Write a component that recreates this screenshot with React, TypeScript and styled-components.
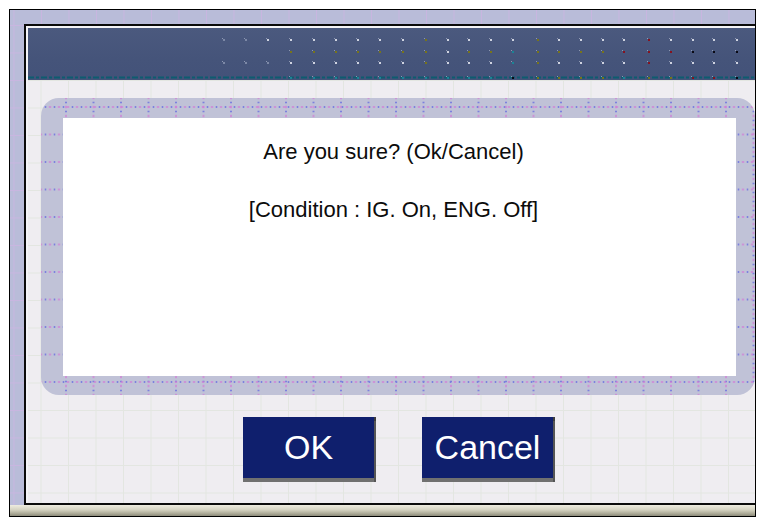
import React from "react";
import styled, { createGlobalStyle } from "styled-components";

const Global = createGlobalStyle`
  html, body { margin: 0; padding: 0; background: #ffffff; }
  body { font-family: "Liberation Sans", Arial, Helvetica, sans-serif; }
`;

const Page = styled.div`
  padding: 9px 0 0 9px;
`;

const Frame = styled.div`
  width: 747px;
  box-sizing: border-box;
  border: 1px solid #000;
  display: flex;
  flex-direction: column;
  background-color: #b9bcd9;
  background-image: linear-gradient(90deg, #c8b6e0 0 1px, transparent 1px),
    linear-gradient(180deg, #c8b6e0 0 1px, transparent 1px);
  background-size: 27.5px 100%, 100% 27.5px;
  background-position: 3.5px 0, 0 15px;
`;

const Body = styled.div`
  padding: 14px 0 0 14px;
`;

const Screen = styled.div`
  border: 2px solid #0b0b0b;
  border-right: none;
  padding: 2px 0 0 2px;
  background: #f4f4f7;
  display: flex;
  flex-direction: column;
`;

const Header = styled.div`
  height: 52px;
  background: linear-gradient(180deg, #4b597e 0%, #45547a 60%, #435279 100%);
`;

const HeaderArt = styled.svg`
  display: block;
  width: 100%;
  height: 52px;
`;

const Content = styled.div`
  height: 423px;
  box-sizing: border-box;
  padding: 18px 0 0 13px;
  display: flex;
  flex-direction: column;
  background-color: #efedf1;
  background-image: linear-gradient(90deg, #e3e6e1 0 1px, transparent 1px),
    linear-gradient(180deg, #e3e6e1 0 1px, transparent 1px);
  background-size: 27.5px 100%, 100% 27.5px;
  background-position: 12.5px 0, 0 0;
`;

const Panel = styled.div`
  height: 297px;
  box-sizing: border-box;
  padding: 20px 19px 19px 22px;
  border-radius: 18px;
  background-color: #c0c2d7;
  background-image:
    radial-gradient(circle, #7c80de 0 0.9px, transparent 1.2px),
    radial-gradient(circle, #d27ad6 0 0.9px, transparent 1.2px),
    radial-gradient(circle, #7c80de 0 0.9px, transparent 1.2px),
    radial-gradient(circle, #d27ad6 0 0.9px, transparent 1.2px);
  background-size: 9px 27.5px, 9px 27.5px, 27.5px 9px, 27.5px 9px;
  background-position: 0 -4.75px, 4.5px -4.75px, 11.25px 0, 11.25px 4.5px;
`;

const Message = styled.div`
  height: 100%;
  box-sizing: border-box;
  background: #ffffff;
  display: flex;
  flex-direction: column;
  align-items: center;
  padding: 21px 12px 0 0;
`;

const Line = styled.div<{ $gap?: number }>`
  font-size: 22px;
  line-height: 26px;
  color: #0c0c0c;
  margin-top: ${(p) => p.$gap ?? 0}px;
  white-space: nowrap;
`;

const ButtonRow = styled.div`
  display: flex;
  justify-content: center;
  gap: 48px;
  margin-top: 22px;
`;

const Button = styled.button`
  width: 131px;
  height: 61px;
  border: none;
  padding: 0;
  background: #0f1f6d;
  color: #ffffff;
  font-family: "Liberation Sans", Arial, Helvetica, sans-serif;
  font-size: 34px;
  line-height: 61px;
  box-shadow: 0 4px 0 #707070, 2px 4px 0 #555555, 2px 0 0 #3c3c3c;
  cursor: pointer;
`;

const BottomBar = styled.div`
  height: 11px;
  background: linear-gradient(180deg, #eeece0 0%, #d4d2c0 45%, #a9a794 80%, #8c8a7a 100%);
`;

const dotColors: Record<string, string> = {
  g: "#cfd3e0",
  f: "#7c88a6",
  o: "#77741a",
  r: "#86121f",
  k: "#0a0a14",
  t: "#1a8496",
};

const columns: [number, string][] = [
  [223, "f.f."],
  [245, "f.f."],
  [267, "g.f."],
  [290, "gogt"],
  [313, "gogt"],
  [335, "gogt"],
  [357, "gogt"],
  [379, "gogt"],
  [402, "gogt"],
  [425, "ooot"],
  [447, "gggt"],
  [468, "gogt"],
  [490, "gogt"],
  [512, "gttk"],
  [537, "oooo"],
  [558, "gogo"],
  [580, "gogo"],
  [602, "gogo"],
  [623, "grgt"],
  [648, "rrro"],
  [670, "grgo"],
  [692, "gkgr"],
  [713, "gkgr"],
  [736, "gkgk"],
];

const rows = [11, 23, 34, 49];

function HeaderDecoration() {
  return (
    <HeaderArt viewBox="0 0 727 52" preserveAspectRatio="none">
      <line x1="0" y1="49.5" x2="727" y2="49.5" stroke="#0d5c70" strokeWidth="2" strokeDasharray="6 2 3 2" />
      {columns.map(([x, code]) =>
        code.split("").map((c, i) =>
          c === "." ? null : (
            <g key={`${x}-${i}`}>
              <rect x={x - 28 - 1} y={rows[i] - 1} width="1" height="1" fill="#8e98b2" />
              <rect x={x - 28} y={rows[i]} width="2" height="2" fill={dotColors[c]} />
            </g>
          )
        )
      )}
    </HeaderArt>
  );
}

export default function App() {
  return (
    <>
      <Global />
      <Page>
        <Frame>
          <Body>
            <Screen>
              <Header>
                <HeaderDecoration />
              </Header>
              <Content>
                <Panel>
                  <Message>
                    <Line>Are you sure? (Ok/Cancel)</Line>
                    <Line $gap={32}>[Condition : IG. On, ENG. Off]</Line>
                  </Message>
                </Panel>
                <ButtonRow>
                  <Button>OK</Button>
                  <Button>Cancel</Button>
                </ButtonRow>
              </Content>
            </Screen>
          </Body>
          <BottomBar />
        </Frame>
      </Page>
    </>
  );
}
